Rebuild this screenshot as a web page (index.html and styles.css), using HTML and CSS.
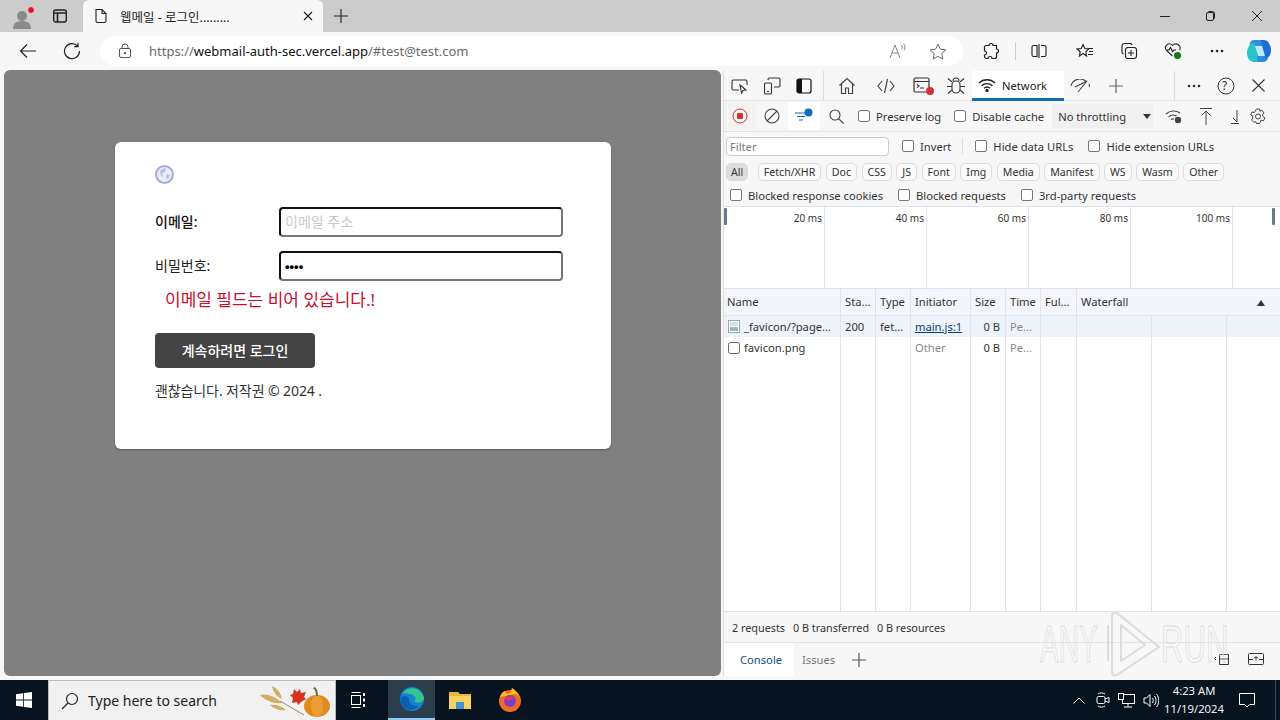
FILE: index.html
```html
<!DOCTYPE html>
<html lang="ko">
<head>
  <meta charset="UTF-8" />
  <title>웹메일 - 로그인</title>
  <link rel="stylesheet" href="styles.css">
</head>
<body>
  <!-- tab strip -->
  <div class="tabstrip">
    <div class="profile">
      <svg width="24" height="26" viewBox="0 0 24 26"><circle cx="10" cy="13" r="5" fill="#8a8a8a"/><path d="M1 26c0-6 4-8 9-8s9 2 9 8z" fill="#8a8a8a"/><circle cx="19" cy="7" r="3.5" fill="#e81123" stroke="#ddd"/></svg>
    </div>
    <div class="strip-btn">
      <svg width="16" height="16" viewBox="0 0 16 16" fill="none" stroke="#222" stroke-width="1.4"><rect x="1.7" y="2" width="12.6" height="12" rx="2"/><path d="M2 5h12M5.500 5v9" stroke-width="1.6"/></svg>
    </div>
    <div class="tab">
      <svg width="14" height="16" viewBox="0 0 14 16" fill="none" stroke="#222" stroke-width="1.1"><path d="M2 1.500h6l4 4V13a1.500 1.500 0 0 1-1.500 1.500H3.500A1.500 1.500 0 0 1 2 13zM8 1.500V5.500h4"/></svg>
      <span class="tab-title">웹메일 - 로그인.........</span>
      <svg class="tab-close" width="10" height="10" viewBox="0 0 10 10" stroke="#222" stroke-width="1.200"><path d="M1 1l8 8M9 1l-8 8"/></svg>
    </div>
    <div class="newtab">
      <svg width="14" height="14" viewBox="0 0 14 14" stroke="#222" stroke-width="1.100"><path d="M7 0v14M0 7h14"/></svg>
    </div>
    <div class="winctl">
      <svg width="46" height="10" viewBox="0 0 46 10" stroke="#222"><path d="M18 5.500h10"/></svg>
      <svg width="46" height="10" viewBox="0 0 46 10" fill="none" stroke="#222"><rect x="18.500" y="1.500" width="7" height="8" rx="1.500"/><path d="M20.500 .5h4a2 2 0 0 1 2 2v5"/></svg>
      <svg width="46" height="10" viewBox="0 0 46 10" stroke="#222"><path d="M18 0l10 10M28 0l-10 10"/></svg>
    </div>
  </div>

  <!-- address bar row -->
  <div class="toolbar">
    <div class="nav-btn">
      <svg width="18" height="16" viewBox="0 0 18 16" fill="none" stroke="#222" stroke-width="1.200"><path d="M17 8H1.500M8 1.500L1.500 8 8 14.500"/></svg>
    </div>
    <div class="nav-btn">
      <svg width="18" height="18" viewBox="0 0 18 18" fill="none" stroke="#222" stroke-width="1.200"><path d="M14.600 4.200A7.500 7.500 0 1 0 16.500 9M15 .8v3.900h-3.900"/></svg>
    </div>
    <div class="addressbar">
      <svg class="lock" width="14" height="16" viewBox="0 0 14 16" fill="none" stroke="#555"><rect x="1.500" y="5.500" width="11" height="9" rx="1.500"/><path d="M4 5.500V4a3 3 0 0 1 6 0v1.500"/><circle cx="7" cy="10" r=".8" fill="#555"/></svg>
      <span class="url"><span class="url-dim">https://</span>webmail-auth-sec.vercel.app<span class="url-dim">/#test@test.com</span></span>
      <svg class="read-aloud" width="18" height="16" viewBox="0 0 18 16" fill="none" stroke="#888"><path d="M1 15L6 2l5 13M3 10h6M12 2c1.500 1 1.500 3 .5 4.500M14.500 .8c2 2 2 4.500.5 6.500"/></svg>
      <svg class="star" width="18" height="17" viewBox="0 0 18 17" fill="none" stroke="#666"><path d="M9 1.200l2.400 5 5.400.7-4 3.700 1 5.400L9 13.400 4.200 16l1-5.400-4-3.700 5.400-.7z"/></svg>
    </div>
    <div class="tool-icons">
      <svg class="t-ext" width="16" height="17" viewBox="0 0 16 17" fill="none" stroke="#222" stroke-width="1.200"><path d="M6 2.500a2 2 0 0 1 4 0h3.500V6a2 2 0 0 1 0 4v3.500a2 2 0 0 1-2 2H9a2 2 0 0 0-4 0H3a2 2 0 0 1-1.500-2V12a2 2 0 0 0 0-4V5a2 2 0 0 1 2-2.500z"/></svg>
      <span class="t-sep"></span>
      <svg class="t-split" width="16" height="16" viewBox="0 0 16 16" fill="none" stroke="#222" stroke-width="1.100"><path d="M6 2.500H2.500a1.500 1.500 0 0 0-1.500 1.500v8a1.500 1.500 0 0 0 1.500 1.500H6zM10 2.500h3.500A1.500 1.500 0 0 1 15 4v8a1.500 1.500 0 0 1-1.500 1.500H10M8 1v14"/></svg>
      <svg class="t-fav" width="18" height="16" viewBox="0 0 18 16" fill="none" stroke="#222" stroke-width="1.100"><path d="M7 1.500l1.800 4 4 .5-3 2.800.8 4.200L7 10.500 3.400 13l.8-4.200-3-2.800 4-.5zM12 5.500h5M13 8.500h4M12 11.500h5"/></svg>
      <svg class="t-coll" width="18" height="18" viewBox="0 0 18 18" fill="none" stroke="#222" stroke-width="1.100"><rect x="5.500" y="5.500" width="11" height="11" rx="2.500"/><path d="M11 8v6M8 11h6M3.500 12A2 2 0 0 1 2 10V4a2.500 2.500 0 0 1 2.500-2.500h5A2 2 0 0 1 12 3"/></svg>
      <svg class="t-health" width="18" height="18" viewBox="0 0 18 18" fill="none" stroke="#222" stroke-width="1.100"><path d="M8.500 14L2.500 8.500C-1 4 5 -.5 8.500 3.500 12 -.5 18 4 15.500 8M2 8h3l1.500-2.500 2 4L10 8h2"/><circle cx="13.500" cy="13.500" r="3.500" fill="#107c10" stroke="none"/></svg>
      <svg class="t-more" width="14" height="4" viewBox="0 0 14 4" fill="#222"><circle cx="2" cy="2" r="1.300"/><circle cx="7" cy="2" r="1.300"/><circle cx="12" cy="2" r="1.300"/></svg>
      <svg class="t-copilot" width="26" height="26" viewBox="0 0 26 26"><path d="M8 2h7c2 0 3 1 3.500 3L22 18c1 3-2 6-5 6h-6c-2 0-3-1-3.500-3L4 8C3 5 5 2 8 2z" fill="#2b8fe0"/><path d="M15 2h3c4 0 7 5 7 10s-2 8-6 8c0-4-4-18-4-18z" fill="#1f6fd0"/><path d="M1 15c0-5 3-10 7-10 3 6 3 16 4 19H8c-4 0-7-4-7-9z" fill="#26c6c6"/><path d="M9 8h7l3 10h-7z" fill="#bfe9f5"/></svg>
    </div>
  </div>

  <div class="main">
    <!-- page -->
    <div class="page">
      <div class="card">
        <div class="logo">
          <svg width="19" height="19" viewBox="0 0 19 19"><circle cx="9.500" cy="9.500" r="8.500" fill="#e9ebf6" stroke="#a7abd4" stroke-width="2"/><path d="M5 6c2-2 4-3 6-2l-1 3-3 1 1 4-2-1zM12 9l3 1-2 4-2-1z" fill="#b6bbdc"/></svg>
        </div>
        <div class="form-row">
          <label class="lbl lbl-strong">이메일:</label>
          <div class="fake-input placeholder">이메일 주소</div>
        </div>
        <div class="form-row">
          <label class="lbl">비밀번호:</label>
          <div class="fake-input dots">••••</div>
        </div>
        <p class="error">이메일 필드는 비어 있습니다.!</p>
        <button class="login-btn">계속하려면 로그인</button>
        <p class="copyright">괜찮습니다. 저작권 © 2024 .</p>
      </div>
    </div>

    <!-- devtools -->
    <div class="devtools">
      <div class="dt-tabs">
        <span class="dt-icon"><svg width="18" height="16" viewBox="0 0 18 16" fill="none" stroke="#333" stroke-width="1.100"><path d="M8 12H2.500A1.500 1.500 0 0 1 1 10.500v-7A1.500 1.500 0 0 1 2.500 2h12A1.500 1.500 0 0 1 16 3.500V7"/><path d="M9 7l1.500 8 1.500-2.500 3-.5z"/></svg></span>
        <span class="dt-icon"><svg width="18" height="18" viewBox="0 0 18 18" fill="none" stroke="#333" stroke-width="1.100"><rect x="1.500" y="6" width="7" height="11" rx="1"/><path d="M5 3V2.500A1.500 1.500 0 0 1 6.500 1h9A1.500 1.500 0 0 1 17 2.500v6a1.500 1.500 0 0 1-1.500 1.500H11M4 14.500h2"/></svg></span>
        <span class="dt-icon"><svg width="16" height="16" viewBox="0 0 16 16"><rect x="1" y="1" width="14" height="14" rx="2" fill="none" stroke="#111" stroke-width="1.200"/><path d="M1 3a2 2 0 0 1 2-2h3v14H3a2 2 0 0 1-2-2z" fill="#111"/></svg></span>
        <span class="dt-sep first-sep"></span>
        <span class="dt-icon home"><svg width="18" height="18" viewBox="0 0 18 18" fill="none" stroke="#444" stroke-width="1.200"><path d="M1.500 8.500L9 1.500l7.500 7M3.500 7v9.500h4V11h3v5.500h4V7"/></svg></span>
        <span class="dt-icon wide"><svg width="18" height="16" viewBox="0 0 18 16" fill="none" stroke="#444" stroke-width="1.200"><path d="M5 3L1 8l4 5M13 3l4 5-4 5M10.500 1l-3 14"/></svg></span>
        <span class="dt-icon wide"><svg width="22" height="20" viewBox="0 0 22 20" fill="none" stroke="#333" stroke-width="1.200"><rect x="1" y="2" width="15" height="14" rx="1.500"/><path d="M1 5.500h15M4 8.500l2 1.500-2 1.500M7 12h4"/><circle cx="17" cy="15" r="4" fill="#d13438" stroke="none"/></svg></span>
        <span class="dt-icon bug"><svg width="18" height="18" viewBox="0 0 18 18" fill="none" stroke="#333" stroke-width="1.100"><rect x="5" y="4" width="8" height="12" rx="4"/><path d="M6 4a3 3 0 0 1 6 0M1 1.500L5 5M17 1.500L13 5M0 9.500h5M13 9.500h5M1 16.500L5 13M17 16.500L13 13"/></svg></span>
        <span class="dt-network">
          <svg width="18" height="14" viewBox="0 0 18 14" fill="none" stroke="#222" stroke-width="1.300"><path d="M1 5a11.500 11.500 0 0 1 16 0M3.500 7.800a8 8 0 0 1 11 0M6 10.300a4.500 4.500 0 0 1 6 0"/><circle cx="9" cy="12.500" r="1" fill="#222"/></svg>
          Network
        </span>
        <span class="dt-icon perf"><svg width="20" height="14" viewBox="0 0 20 14" fill="none" stroke="#444" stroke-width="1.100"><path d="M1 7a9 9 0 0 1 15-4.500M8 13l9-11-12 6M19 5c.5 1 .5 2 .2 3"/></svg></span>
        <span class="dt-icon plus"><svg width="14" height="14" viewBox="0 0 14 14" stroke="#666" stroke-width="1.200"><path d="M7 0v14M0 7h14"/></svg></span>
        <span class="dt-sep right-sep"></span>
        <span class="dt-icon dt-dots"><svg width="14" height="4" viewBox="0 0 14 4" fill="#333"><circle cx="2" cy="2" r="1.300"/><circle cx="7" cy="2" r="1.300"/><circle cx="12" cy="2" r="1.300"/></svg></span>
        <span class="dt-icon"><svg width="18" height="18" viewBox="0 0 18 18" fill="none" stroke="#333"><circle cx="9" cy="9" r="8"/></svg><span class="qmark">?</span></span>
        <span class="dt-icon"><svg width="13" height="13" viewBox="0 0 13 13" stroke="#333" stroke-width="1.100"><path d="M.5 .5l12 12M12.500 .5l-12 12"/></svg></span>
      </div>

      <div class="dt-row net-tools">
        <span class="dt-icon rec"><svg width="16" height="16" viewBox="0 0 16 16"><circle cx="8" cy="8" r="7" fill="none" stroke="#d13438"/><rect x="5" y="5" width="6" height="6" rx="1" fill="#d13438"/></svg></span>
        <span class="dt-icon"><svg width="16" height="16" viewBox="0 0 16 16" fill="none" stroke="#444" stroke-width="1.100"><circle cx="8" cy="8" r="7"/><path d="M3 13L13 3"/></svg></span>
        <span class="dt-icon filter-on"><svg width="20" height="16" viewBox="0 0 20 16" fill="none" stroke="#0f6cbd" stroke-width="1.200"><path d="M1 5h11M3 8.500h8M5 12h4"/><circle cx="14.500" cy="4.500" r="4" fill="#0f6cbd" stroke="none"/></svg></span>
        <span class="dt-icon"><svg width="15" height="15" viewBox="0 0 15 15" fill="none" stroke="#444" stroke-width="1.100"><circle cx="6" cy="6" r="5"/><path d="M9.500 9.500L14.500 14.500"/></svg></span>
        <label class="chk chk-preserve"><i></i>Preserve log</label>
        <label class="chk chk-cache"><i></i>Disable cache</label>
        <span class="throttle">No throttling<b></b></span>
        <span class="dt-icon t-wifi"><svg width="18" height="15" viewBox="0 0 18 15" fill="none" stroke="#444" stroke-width="1.100"><path d="M1 5a11 11 0 0 1 14-1M3.500 8a7 7 0 0 1 8-1M6 10.500a3.500 3.500 0 0 1 3-.5"/><circle cx="13" cy="11" r="3.200" fill="#444" stroke="none"/></svg></span>
        <span class="dt-icon t-up"><svg width="12" height="17" viewBox="0 0 12 17" fill="none" stroke="#444"><path d="M0 .5h12M6 3v14M1.500 7.500L6 3l4.500 4.500"/></svg></span>
        <span class="dt-icon t-down"><svg width="8" height="15" viewBox="0 0 8 15" fill="none" stroke="#444"><path d="M0 14.500h8M6 1v12M2 9l4 4"/></svg></span>
        <span class="dt-icon t-gear"><svg width="16" height="17" viewBox="0 0 16 17" fill="none" stroke="#444"><path d="M6.500 1h3l.5 2.300 2-1 2 2.700-1.500 1.800.1 1.400L15 10l-1.500 2.800-2.400-.8-1 2.300-.6 1.200h-3L6 13.900l-2.200.2L1.500 12l1.300-2-.1-2-2-1L2 4l2.300.5z"/><circle cx="8" cy="8.500" r="2.500"/></svg></span>
      </div>

      <div class="dt-row filter-row">
        <div class="filter-box">Filter</div>
        <label class="chk chk-invert"><i></i>Invert</label>
        <span class="v-line"></span>
        <label class="chk chk-data"><i></i>Hide data URLs</label>
        <label class="chk chk-ext"><i></i>Hide extension URLs</label>
      </div>

      <div class="chips">
        <span class="chip all">All</span>
        <span class="chip chip-first">Fetch/XHR</span>
        <span class="chip">Doc</span>
        <span class="chip">CSS</span>
        <span class="chip">JS</span>
        <span class="chip">Font</span>
        <span class="chip">Img</span>
        <span class="chip">Media</span>
        <span class="chip">Manifest</span>
        <span class="chip">WS</span>
        <span class="chip">Wasm</span>
        <span class="chip">Other</span>
      </div>

      <div class="dt-row blocked-row">
        <label class="chk"><i></i>Blocked response cookies</label>
        <label class="chk"><i></i>Blocked requests</label>
        <label class="chk"><i></i>3rd-party requests</label>
      </div>

      <div class="overview">
        <div class="ov-col">20 ms</div>
        <div class="ov-col">40 ms</div>
        <div class="ov-col">60 ms</div>
        <div class="ov-col">80 ms</div>
        <div class="ov-col">100 ms</div>
        <span class="handle handle-l"></span>
        <span class="handle handle-r"></span>
      </div>

      <div class="net-table">
        <div class="net-row net-head">
          <div>Name</div><div>Sta...</div><div>Type</div><div>Initiator</div><div>Size</div><div>Time</div><div>Ful...</div>
          <div class="wf">Waterfall<b class="sort"></b></div>
        </div>
        <div class="net-row row-sel">
          <div class="name"><svg width="12" height="13" viewBox="0 0 12 13"><rect x=".5" y=".5" width="11" height="12" fill="#fff" stroke="#9aa"/><rect x="2" y="2" width="8" height="4" fill="#cfe0ee"/><rect x="2" y="7" width="8" height="4" fill="#9fb7c9"/></svg>_favicon/?page...</div>
          <div>200</div><div>fet...</div><div><a class="link">main.js:1</a></div><div class="num">0 B</div><div class="dim">Pe...</div><div></div>
          <div></div><div></div><div></div>
        </div>
        <div class="net-row">
          <div class="name"><svg width="12" height="12" viewBox="0 0 12 12"><rect x=".5" y=".5" width="11" height="11" rx="2" fill="#fff" stroke="#666"/></svg>favicon.png</div>
          <div></div><div></div><div class="dim">Other</div><div class="num">0 B</div><div class="dim">Pe...</div><div></div>
          <div></div><div></div><div></div>
        </div>
        <div class="net-row net-fill">
          <div></div><div></div><div></div><div></div><div></div><div></div><div></div>
          <div></div><div></div><div></div>
        </div>
      </div>

      <div class="net-summary">
        <span>2 requests</span><span>0 B transferred</span><span>0 B resources</span>
      </div>

      <div class="drawer">
        <span class="drawer-tab">Console</span>
        <span class="drawer-issues">Issues</span>
        <svg class="drawer-plus" width="14" height="14" viewBox="0 0 14 14" stroke="#555" stroke-width="1.200"><path d="M7 0v14M0 7h14"/></svg>
        <svg class="drawer-dock" width="16" height="13" viewBox="0 0 16 13" fill="none" stroke="#333"><path d="M5.500 1.500h9v10h-9zM5.500 6h9M2 4L.5 5.500 2 7"/></svg>
        <svg class="drawer-up" width="16" height="13" viewBox="0 0 16 13" fill="none" stroke="#333"><rect x=".5" y=".5" width="15" height="11" rx="1"/><path d="M0 6.500h5M11 6.500h5M8 3.500v4M6 5.500l2-2 2 2"/></svg>
      </div>
    </div>
  </div>

  <!-- taskbar -->
  <div class="taskbar">
    <div class="start">
      <svg width="16" height="16" viewBox="0 0 16 16" fill="#fff"><path d="M0 2.200l7-1v6.400H0zM7.800 1.100L16 0v7.600H7.800zM0 8.400h7v6.400l-7-1zM7.800 8.400H16V16l-8.200-1.100z"/></svg>
    </div>
    <div class="searchbox">
      <svg width="18" height="18" viewBox="0 0 18 18" fill="none" stroke="#222" stroke-width="1.200"><circle cx="11" cy="7" r="5.500"/><path d="M7 11l-6 6"/></svg>
      <span>Type here to search</span>
      <svg class="autumn" width="72" height="32" viewBox="0 0 72 32">
        <path d="M0 10c8-2 16 2 22 8-8 1-16-2-22-8zM12 1c5 2 9 7 10 13-5-2-9-7-10-13zM10 20c6-1 12 1 16 5-6 1-12-1-16-5z" fill="#d3ad63"/>
        <path d="M20 16l24 14" stroke="#a08a5a" fill="none"/>
        <path d="M34 4l3 3 3-3 1 4 5-1-2 5 2 2-5 3-3 3-1-3-5 1 1-5-3-3 3-1z" fill="#d8321e"/>
        <ellipse cx="57" cy="21" rx="13" ry="11" fill="#e08a1e"/>
        <ellipse cx="57" cy="21" rx="6" ry="11" fill="#eb9d34"/>
        <path d="M56 11c0-4-1-6-3-8l2-1c2 2 3 5 3 9z" fill="#7d6a3a"/>
      </svg>
    </div>
    <div class="task-icon task-view">
      <svg width="16" height="16" viewBox="0 0 16 16" fill="none" stroke="#fff"><path d="M.5 .5h9M.5 15.500h9"/><rect x=".5" y="3.500" width="9" height="9"/><path d="M13 1v3M13 6.500v3M13 12v3" stroke-width="2"/></svg>
    </div>
    <div class="task-icon edge">
      <svg width="24" height="24" viewBox="0 0 24 24"><circle cx="12" cy="12" r="12" fill="#1383d6"/><path d="M3 6C7-1 21-1 24 11c0 5-8 6-10 3 3-1 2-6-4-7-3-.5-5 0-7-1z" fill="#37c58f"/><path d="M9 11c-1 5 4 9 10 8-3 3-8 5-12 3C2 20-1 14 1 10c2-1 6-1 8 1z" fill="#0b5fae"/></svg>
    </div>
    <div class="task-icon folder">
      <svg width="22" height="19" viewBox="0 0 22 19"><path d="M0 1h9l2 2h11v15H0z" fill="#e5b73b"/><rect x="0" y="5" width="22" height="13" fill="#f6d25f"/><rect x="7" y="11" width="8" height="7" fill="#3c94d6"/></svg>
    </div>
    <div class="task-icon firefox">
      <svg width="24" height="24" viewBox="0 0 24 24"><circle cx="12" cy="13" r="11" fill="#f26b21"/><path d="M2 9c1-4 4-6 5-6 0 2 2 3 4 3 2-2 2-4 3-6 3 2 7 5 8 11-1-3-3-5-5-5z" fill="#fbbd1e"/><circle cx="12" cy="13" r="6" fill="#7b3fc4"/><path d="M7 10c2-2 7-2 9 0-2 2-4 1-5 3-2 0-3-2-4-3z" fill="#e8365d"/></svg>
    </div>
    <div class="tray">
      <svg class="tr-chev" width="12" height="7" viewBox="0 0 12 7" fill="none" stroke="#fff"><path d="M.5 6.500L6 1l5.500 5.500"/></svg>
      <svg class="tr-meet" width="14" height="16" viewBox="0 0 14 16" fill="none" stroke="#fff"><rect x="1" y="4.500" width="8" height="7" rx="1.500"/><path d="M9 7l4-1.500v5L9 9M2 2c2-1.500 5-1.500 7 0M2 14c2 1.500 5 1.500 7 0"/></svg>
      <svg class="tr-net" width="17" height="15" viewBox="0 0 17 15" fill="none" stroke="#fff"><rect x="4.500" y="1.500" width="12" height="9"/><path d="M10 10.500v3M6 14h8"/><rect x=".5" y=".5" width="5" height="6" fill="#0a1a26"/></svg>
      <svg class="tr-vol" width="16" height="15" viewBox="0 0 16 15" fill="none" stroke="#fff"><path d="M1 5h2.500L7 1.500v12L3.500 10H1zM9.500 5c1 1.500 1 3.500 0 5M11.500 3c2 2.500 2 6.500 0 9M13.500 1c3 3.500 3 9.500 0 13"/></svg>
      <div class="clock"><div>4:23 AM</div><div>11/19/2024</div></div>
      <svg class="tr-note" width="16" height="15" viewBox="0 0 16 15" fill="none" stroke="#fff"><path d="M.5 .5h15v11h-5L8 14l-2.500-2.500h-5z"/></svg>
      <span class="show-desktop"></span>
    </div>
  </div>

  <!-- watermark -->
  <div class="watermark">
    <span class="wm-any">ANY</span>
    <svg width="54" height="66" viewBox="0 0 54 66" fill="none" stroke="#dcdcdc" stroke-width="2" stroke-linejoin="round"><path d="M10 2L52 36 10 64c-3 1-5 0-5-3V5c0-3 2-4 5-3zM14 14v36l24-16zM1 14v36"/></svg>
    <span class="wm-run">RUN</span>
  </div>
</body>
</html>
```

FILE: styles.css
```css
* { box-sizing: border-box; }
html, body { margin: 0; padding: 0; }
body {
  width: 1280px;
  height: 720px;
  overflow: hidden;
  display: flex;
  flex-direction: column;
  position: relative;
  font-family: "Noto Sans", "Noto Sans CJK KR", sans-serif;
  font-size: 12px;
  color: #222;
  background: #f7f7f7;
}
svg { display: block; flex: none; }

/* tab strip */
.tabstrip {
  height: 32px;
  background: #cccccc;
  display: flex;
  align-items: center;
}
.profile { width: 44px; padding-left: 12px; }
.strip-btn { width: 39px; padding-left: 8px; }
.tab {
  width: 240px;
  height: 32px;
  background: #f7f7f7;
  border-radius: 6px 6px 0 0;
  display: flex;
  align-items: center;
  padding-left: 11px;
}
.tab-title { margin-left: 12px; flex: 1; font-size: 12.5px; color: #222; }
.tab-close { margin-right: 10px; }
.newtab { margin-left: 11px; }
.winctl { margin-left: auto; display: flex; }

/* address row */
.toolbar {
  height: 38px;
  background: #f7f7f7;
  display: flex;
  align-items: center;
}
.nav-btn { width: 44px; display: flex; justify-content: center; margin-left: 6px; }
.nav-btn + .nav-btn { margin-left: 0; }
.addressbar {
  width: 863px;
  height: 30px;
  margin-left: 6px;
  background: #fff;
  border-radius: 15px;
  display: flex;
  align-items: center;
  padding-left: 18px;
}
.url { margin-left: 17px; font-size: 13px; flex: 1; color: #111; }
.url-dim { color: #6b6b6b; }
.star { margin: 0 16px 0 22px; }
.tool-icons { display: flex; align-items: center; flex: 1; }
.t-ext { margin-left: 20px; }
.t-sep { width: 1px; height: 18px; background: #ccc; margin-left: 16px; }
.t-split { margin-left: 15px; }
.t-fav { margin-left: 29px; }
.t-coll { margin-left: 26px; }
.t-health { margin-left: 26px; }
.t-more { margin-left: 28px; }
.t-copilot { margin-left: 22px; }

/* main area */
.main {
  height: 610px;
  display: flex;
  background: #f7f7f7;
}
.page {
  width: 717px;
  height: 606px;
  margin-left: 4px;
  background: #808080;
  border-radius: 6px;
  padding: 72px 0 0 111px;
}
.card {
  width: 496px;
  height: 307px;
  background: #fff;
  border-radius: 6px;
  padding: 23px 48px 0 40px;
  box-shadow: 0 1px 2px rgba(0,0,0,0.3);
}
.logo { height: 21px; margin-bottom: 21px; }
.form-row {
  display: flex;
  align-items: center;
  height: 30px;
  margin-bottom: 14px;
}
.lbl { width: 124px; font-size: 14px; color: #222; margin-top: -2px; }
.lbl-strong { font-weight: 500; color: #111; }
.fake-input {
  width: 284px;
  height: 30px;
  border: 2px solid;
  border-color: #111 #777 #777 #111;
  border-radius: 4px;
  padding: 0 0 2px 4px;
  display: flex;
  align-items: center;
  font-size: 14px;
}
.placeholder { color: #c9c9c9; }
.dots { color: #000; font-size: 13px; padding-bottom: 0; font-family: "Liberation Sans", sans-serif; font-weight: bold; }
.error {
  margin: -6px 0 0 10px;
  font-size: 17px;
  line-height: 22px;
  color: #c8102e;
}
.login-btn {
  display: block;
  width: 160px;
  height: 35px;
  margin-top: 22px;
  padding: 0 0 2px;
  border: none;
  border-radius: 4px;
  background: #444;
  color: #fff;
  font-family: inherit;
  font-size: 14px;
  font-weight: 500;
}
.copyright { margin: 14px 0 0; font-size: 14px; line-height: 18px; color: #333; letter-spacing: -0.1px; }

/* devtools */
.devtools {
  width: 557px;
  margin-left: 2px;
  display: flex;
  flex-direction: column;
  height: 606px;
  border-left: 1px solid #ddd;
  color: #333;
  font-size: 11.2px;
}
.dt-tabs {
  height: 31px;
  display: flex;
  align-items: center;
  border-bottom: 1px solid #e4e4e4;
  padding-top: 1px;
}
.dt-row {
  display: flex;
  align-items: center;
  border-bottom: 1px solid #dfe3ee;
}
.dt-icon {
  width: 32px;
  height: 28px;
  flex: none;
  display: flex;
  align-items: center;
  justify-content: center;
  position: relative;
}
.dt-sep { width: 1px; height: 30px; background: #dcdcdc; flex: none; }
.first-sep { margin-left: 3px; }
.dt-icon.home { margin-left: 7px; }
.dt-icon.wide { width: 38px; margin-left: 4px; }
.dt-icon.wide + .dt-icon.wide { margin-left: 0; }
.dt-icon.bug { width: 30px; margin-left: -2px; }
.dt-network {
  width: 92px;
  height: 30px;
  margin-left: 1px;
  background: #fff;
  border-bottom: 3px solid #0f6cbd;
  display: flex;
  align-items: center;
  gap: 6px;
  padding: 2px 0 0 6px;
  color: #222;
}
.dt-icon.plus { margin-left: 4px; }
.right-sep { margin-left: 42px; }
.dt-dots { margin-left: 3px; }
.qmark { position: absolute; left: 12px; top: 5px; font-size: 12px; color: #333; }

.net-tools { height: 31px; }
.dt-icon.rec { background: #f3f3f3; }
.filter-on { background: #fff; }
.chk { display: flex; align-items: center; gap: 6px; white-space: nowrap; }
.chk i {
  width: 12px;
  height: 12px;
  border: 1px solid #777;
  border-radius: 2px;
  background: #fff;
  flex: none;
}
.chk-preserve { margin-left: 6px; }
.chk-cache { margin-left: 13px; }
.throttle {
  width: 101px;
  height: 24px;
  margin-left: 8px;
  padding-left: 6px;
  background: #f0f0f0;
  display: flex;
  align-items: center;
  position: relative;
}
.throttle b {
  position: absolute;
  right: 2px;
  top: 10px;
  border: 4px solid transparent;
  border-top: 5px solid #333;
  border-bottom: 0;
}
.dt-icon.t-wifi { margin-left: 5px; }
.dt-icon.t-down { margin-left: -3px; }
.dt-icon.t-gear { margin-left: -9px; }

.filter-row { height: 28px; padding-left: 2px; border-bottom: none; }
.filter-box {
  width: 163px;
  height: 19px;
  background: #fff;
  border: 1px solid #ccc;
  border-radius: 4px;
  padding-left: 3px;
  line-height: 17px;
  color: #777;
}
.chk-invert { margin-left: 13px; }
.v-line { width: 1px; height: 16px; background: #ddd; margin-left: 11px; }
.chk-data { margin-left: 12px; }
.chk-ext { margin-left: 15px; }

.chips {
  height: 24px;
  display: flex;
  align-items: center;
  gap: 4.5px;
  padding-left: 2px;
}
.chip {
  height: 18px;
  padding: 0 5px;
  border: 1px solid #ddd;
  border-radius: 5px;
  background: #fafafa;
  line-height: 16px;
  color: #333;
  font-size: 10.6px;
}
.chip.all { background: #dcdcdc; border-color: #dcdcdc; padding: 0 4px; }
.chip-first { margin-left: 5px; }

.blocked-row { height: 23px; padding-left: 6px; gap: 15px; }

.overview {
  height: 82px;
  background: #fff;
  display: flex;
  position: relative;
  border-bottom: 1px solid #dfe3ee;
}
.ov-col {
  width: 102px;
  border-right: 1px solid #dfe3ee;
  text-align: right;
  padding: 4px 2px 0 0;
  font-size: 10px;
  line-height: 14px;
  color: #333;
}
.ov-col:first-child { width: 101px; }
.handle {
  position: absolute;
  top: 1px;
  width: 3px;
  height: 17px;
  background: #6a7a8a;
  border-radius: 1px;
}
.handle-l { left: 0; }
.handle-r { right: 5px; }

.net-table { flex: 1; display: flex; flex-direction: column; background: #fff; }
.net-row {
  display: grid;
  grid-template-columns: 117px 35px 35px 60px 35px 35px 36px 75px 75px 1fr;
  height: 21px;
  line-height: 21px;
}
.net-row > div {
  border-right: 1px solid #dfe3ee;
  padding-left: 4px;
  white-space: nowrap;
  overflow: hidden;
}
.net-row > div:last-child { border-right: none; }
.net-head {
  height: 27px;
  line-height: 26px;
  background: #f3f5fa;
  border-bottom: 1px solid #dfe3ee;
}
.net-head > div:first-child { padding-left: 3px; }
.net-head .wf { grid-column: 8 / 11; position: relative; border-right: none; }
.sort {
  position: absolute;
  right: 15px;
  top: 11px;
  border: 4px solid transparent;
  border-bottom: 6px solid #333;
  border-top: 0;
}
.row-sel { background: #eef2f9; }
.name { display: flex; align-items: center; gap: 4px; }
.link { color: #0b3d75; text-decoration: underline; }
.num { text-align: right; padding-right: 5px; }
.dim { color: #888; }
.net-fill { flex: 1; height: auto; }

.net-summary {
  height: 32px;
  display: flex;
  align-items: center;
  gap: 8px;
  padding-left: 8px;
  background: #f7f7f7;
  border-top: 1px solid #dfe3ee;
  border-bottom: 1px solid #dfe3ee;
  font-size: 10.8px;
}
.drawer {
  height: 33px;
  display: flex;
  align-items: center;
  background: #f7f7f7;
}
.drawer-tab {
  width: 70px;
  height: 33px;
  background: #fff;
  padding-left: 16px;
  line-height: 33px;
  color: #0f4c81;
}
.drawer-issues { margin-left: 8px; width: 31px; color: #777; }
.drawer-plus { margin-left: 19px; }
.drawer-dock { margin-left: auto; }
.drawer-up { margin: 0 16px 0 18px; }

/* taskbar */
.taskbar {
  height: 40px;
  background: #07131f;
  display: flex;
  align-items: center;
  color: #fff;
}
.start { width: 48px; display: flex; justify-content: center; }
.searchbox {
  width: 288px;
  height: 40px;
  background: #f1f1f1;
  border: 1px solid #bbb;
  border-bottom: none;
  display: flex;
  align-items: center;
  padding-left: 12px;
  color: #222;
  font-size: 14px;
}
.searchbox span { margin-left: 9px; flex: 1; }
.autumn { margin-right: 3px; }
.task-icon { width: 46px; height: 40px; display: flex; align-items: center; justify-content: center; }
.edge { width: 47px; margin-left: 6px; background: #2c3d4b; border-bottom: 2px solid #8ecbf5; }
.folder { margin-left: 2px; }
.firefox { margin-left: 4px; }
.tray { margin-left: auto; display: flex; align-items: center; height: 40px; }
.tr-meet { margin-left: 11px; }
.tr-net { margin-left: 8px; }
.tr-vol { margin-left: 8px; }
.clock { width: 70px; text-align: center; font-size: 11.3px; line-height: 18px; color: #fff; font-family: "Open Sans", sans-serif; }
.tr-note { margin-left: 10px; }
.show-desktop { width: 1px; height: 40px; background: #3a4651; margin: 0 4px 0 20px; }

/* watermark */
.watermark {
  position: absolute;
  left: 1040px;
  top: 611px;
  height: 66px;
  display: flex;
  align-items: center;
  pointer-events: none;
}
.watermark span {
  display: block;
  font-family: "Liberation Sans", sans-serif;
  font-size: 52px;
  color: rgba(255,255,255,0.15);
  -webkit-text-stroke: 1px #dcdcdc;
  transform-origin: left center;
  white-space: nowrap;
}
.wm-any { width: 58px; margin-right: 9px; transform: scaleX(0.54); }
.wm-run { width: 68px; transform: scaleX(0.6); }
```
